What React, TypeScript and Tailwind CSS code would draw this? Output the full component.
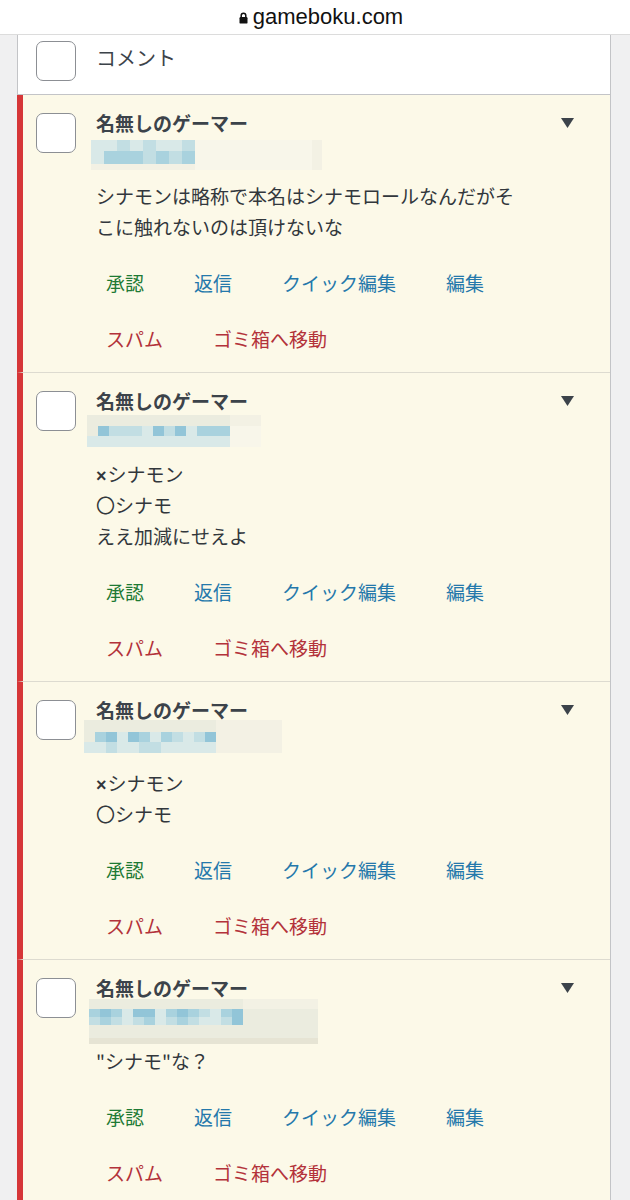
import clsx from "clsx";

type Mosaic = {
  box: string;
  cell: string;
  rows: [string, string][];
};

type Comment = {
  lines: string[];
  email: Mosaic;
};

// pixelated e-mail address colours
const px: Record<string, string> = {
  a: "bg-[#d9e9e8]",
  b: "bg-[#c2dee3]",
  c: "bg-[#a9d2de]",
  d: "bg-[#92c5d8]",
  e: "bg-[#ebecdf]",
  g: "bg-[#f3f1e4]",
  w: "bg-[#f8f6ea]",
  h: "bg-[#e6e4d4]",
};

const comments: Comment[] = [
  {
    lines: ["シナモンは略称で本名はシナモロールなんだがそ", "こに触れないのは頂けないな"],
    email: {
      box: "-ml-[5px] mt-[5px] w-[231px] h-[30px]",
      cell: "w-[13px]",
      rows: [
        ["h-[11px]", "aababaabwwwwwwwwwg"],
        ["h-[13px]", "acccbcbcwwwwwwwwwg"],
        ["h-[6px]", "ggggggggwwwwwwwwwg"],
      ],
    },
  },
  {
    lines: ["×シナモン", "〇シナモ", "ええ加減にせえよ"],
    email: {
      box: "-ml-[9px] mt-[2px] w-[174px] h-[32px]",
      cell: "w-[11px]",
      rows: [
        ["h-[11px]", "eeeeeeeeeeeeeggg"],
        ["h-[10px]", "edbbbadbdacccwww"],
        ["h-[11px]", "aaaaaaaaaaaaawww"],
      ],
    },
  },
  {
    lines: ["×シナモン", "〇シナモ"],
    email: {
      box: "-ml-[12px] -mt-[2px] w-[198px] h-[33px]",
      cell: "w-[11px]",
      rows: [
        ["h-[12px]", "eeeeeeeeeeeeggggggh"],
        ["h-[10px]", "ecdadcacbabdggggggh"],
        ["h-[11px]", "aabaabbaaaaaggggggh"],
      ],
    },
  },
  {
    lines: ["\"シナモ\"な？"],
    email: {
      box: "-ml-[7px] -mt-[1px] w-[229px] h-[45px]",
      cell: "w-[11px]",
      rows: [
        ["h-[10px]", "eeeeeeeeeeeeeeggggggg"],
        ["h-[8px]", "cdcaddacdcbacdeeeeeee"],
        ["h-[8px]", "bcbabcabcbaabdeeeeeee"],
        ["h-[13px]", "eeeeeeeeeeeeeeeeeeeee"],
        ["h-[6px]", "hhhhhhhhhhhhhhhhhhhhh"],
      ],
    },
  },
];

const jp = "font-['Noto_Sans_CJK_JP',sans-serif]";

const Checkbox = ({ className }: { className?: string }) => (
  <div
    className={clsx(
      "w-[40px] h-[40px] shrink-0 rounded-[7px] border-[1.5px] border-[#8c8f94] bg-white",
      className
    )}
  />
);

const Email = ({ m }: { m: Mosaic }) => (
  <div className={clsx("flex flex-col overflow-hidden", m.box)}>
    {m.rows.map(([h, pattern], i) => (
      <div key={i} className={clsx("flex shrink-0", h)}>
        {pattern.split("").map((ch, j) => (
          <div key={j} className={clsx("h-full shrink-0", m.cell, px[ch])} />
        ))}
      </div>
    ))}
  </div>
);

// the × in the comments is a small latin glyph, not the wide CJK one
const Line = ({ text }: { text: string }) =>
  text.startsWith("×") ? (
    <p>
      <span className="mr-[1px] font-['Liberation_Sans',sans-serif] text-[18px] font-bold leading-[0px]">
        ×
      </span>
      {text.slice(1)}
    </p>
  ) : (
    <p>{text}</p>
  );

const CommentRow = ({ c }: { c: Comment }) => (
  <div className="flex bg-[#fcf9e8] border-l-[6px] border-l-[#d63638] border-b border-b-[#dddbd0] pl-[13px]">
    <Checkbox className="mt-[18px]" />
    <div className="ml-[20px] flex-1 pt-[16px] pb-[5px]">
      <div className="flex h-[24px] items-center justify-between pr-[36px]">
        <span className="text-[19px] font-bold leading-[24px] text-[#3c434a]">
          名無しのゲーマー
        </span>
        <svg width="13" height="10" viewBox="0 0 13 10">
          <path d="M0 0h13L6.5 10z" fill="#3c434a" />
        </svg>
      </div>
      <div className="flex h-[45px] flex-col">
        <Email m={c.email} />
      </div>
      <div className="text-[19px] leading-[31px] text-[#32373c] whitespace-nowrap">
        {c.lines.map((l, i) => (
          <Line key={i} text={l} />
        ))}
      </div>
      <div className="mt-[13px] pl-[10px] text-[19px] leading-[56px] whitespace-nowrap">
        <div className="flex gap-[50px]">
          <span className="text-[#1e7a34]">承認</span>
          <span className="text-[#2478ab]">返信</span>
          <span className="text-[#2478ab]">クイック編集</span>
          <span className="text-[#2478ab]">編集</span>
        </div>
        <div className="flex gap-[50px]">
          <span className="text-[#b3323a]">スパム</span>
          <span className="text-[#b3323a]">ゴミ箱へ移動</span>
        </div>
      </div>
    </div>
  </div>
);

export default function App() {
  return (
    <div className={clsx("w-[630px] h-[1200px] overflow-hidden bg-[#f0f0f1]", jp)}>
      <div className="flex h-[35px] items-center justify-center gap-[5px] border-b border-[#dcdcdc] bg-white pl-[12px]">
        <svg width="9" height="12" viewBox="0 0 9 12" className="mt-[1px]">
          <path d="M2.2 5.5V3.6a2.3 2.3 0 0 1 4.6 0v1.9" fill="none" stroke="#111" strokeWidth="1.5" />
          <rect x="0.5" y="5" width="8" height="6.6" rx="1.2" fill="#111" />
        </svg>
        <span className="font-['Liberation_Sans',sans-serif] text-[22px] leading-[26px] text-[#111]">
          gameboku.com
        </span>
      </div>
      <div className="ml-[17px] w-[594px] border-r border-[#c3c4c7]">
        <div className="flex h-[60px] items-start border-l border-b border-[#c3c4c7] bg-white pl-[18px]">
          <Checkbox className="mt-[6px]" />
          <span className="ml-[20px] mt-[11px] text-[20px] leading-[24px] text-[#3c434a]">
            コメント
          </span>
        </div>
        {comments.map((c, i) => (
          <CommentRow key={i} c={c} />
        ))}
      </div>
    </div>
  );
}
